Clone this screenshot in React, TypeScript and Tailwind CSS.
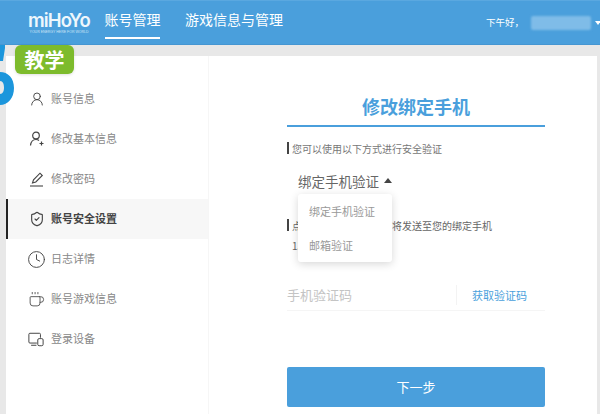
import { Clock, Coffee, ShieldCheck, UserRound } from "lucide-react";
import type { ReactNode } from "react";

const cjk = "font-['Noto_Sans_CJK_SC',sans-serif]";

function UserPlusIcon() {
  return (
    <svg width="16" height="16" viewBox="0 0 16 16" fill="none" stroke="currentColor" strokeWidth="1.2">
      <circle cx="7" cy="4.5" r="3.3" />
      <path d="M1.5 14.5c.4-3.6 2.4-6 5.500-6 1.200 0 2.200.3 3 1" />
      <path d="M12.500 10.500v4M10.500 12.500h4" />
    </svg>
  );
}

function PenIcon() {
  return (
    <svg width="16" height="16" viewBox="0 0 16 16" fill="none" stroke="currentColor" strokeWidth="1.1">
      <path d="M3.500 12l1-3.200L11 2.200l2.300 2.300-6.500 6.500z" />
      <path d="M1 15h13" />
    </svg>
  );
}

function DevicesIcon() {
  return (
    <svg className="-ml-[1px]" width="16" height="15" viewBox="0 0 18 16" fill="none" stroke="currentColor" strokeWidth="1.1">
      <path d="M10 12H2.200A1.200 1.200 0 0 1 1 10.800V2.200A1.200 1.200 0 0 1 2.200 1h10.600A1.200 1.200 0 0 1 14 2.200V6" />
      <path d="M3.500 14.500h6" />
      <rect x="11" y="7" width="6" height="8" rx="1.500" />
    </svg>
  );
}

const menu: { label: string; icon: ReactNode; active?: boolean }[] = [
  { label: "账号信息", icon: <UserRound size={16} strokeWidth={1.4} /> },
  { label: "修改基本信息", icon: <UserPlusIcon /> },
  { label: "修改密码", icon: <PenIcon /> },
  { label: "账号安全设置", icon: <ShieldCheck size={16} strokeWidth={1.7} />, active: true },
  { label: "日志详情", icon: <Clock className="-ml-[2px]" size={19} strokeWidth={1.2} /> },
  { label: "账号游戏信息", icon: <Coffee className="-ml-[1px]" size={17} strokeWidth={1.2} /> },
  { label: "登录设备", icon: <DevicesIcon /> },
];

function SideItem({ label, icon, active }: { label: string; icon: ReactNode; active?: boolean }) {
  return (
    <div
      className={
        active
          ? "h-10 flex items-center border-l-2 border-[#222] bg-[#f7f7f7] pl-[21px] text-[#444] font-bold"
          : "h-10 flex items-center pl-[23px] text-[#888]"
      }
    >
      <span className="w-[22px] flex justify-start text-[#444]">{icon}</span>
      <span className="text-[11px] mb-[1px]">{label}</span>
    </div>
  );
}

export default function App() {
  return (
    <div className={`relative w-[600px] h-[414px] overflow-hidden bg-[#e8e8e8] ${cjk}`}>
      <header className="h-[45px] bg-[#4a9fdc] border-t border-[#5aa8e0] border-b border-b-[#4596d2] flex items-center text-white">
        <div className="w-[62px] ml-[28px] flex flex-col items-center mt-[-1px]">
          <span className="font-['Inter',sans-serif] text-[18.500px] font-semibold tracking-[-0.9px] leading-[19px] text-[#eef7fd]">
            miHoYo
          </span>
          <span className="font-['Liberation_Sans',sans-serif] text-[3.500px] h-[4px] leading-[4px] whitespace-nowrap text-[#cfe6f6]">
            YOUR ENERGY HERE FOR WORLD
          </span>
        </div>
        <nav className="ml-[15px] flex self-start text-[14px]">
          <div className="h-[38px] w-[55px] flex items-center justify-center border-b-2 border-white whitespace-nowrap">
            账号管理
          </div>
          <div className="ml-[25px] h-[38px] flex items-center whitespace-nowrap pb-[2px]">游戏信息与管理</div>
        </nav>
        <div className="ml-auto flex items-center">
          <span className="text-[9.500px] mr-[7px]">下午好，</span>
          <span className="w-[60px] h-[14px] bg-[#7fbce8] rounded-[2px] blur-[1px]" />
          <span className="ml-[4px] w-0 h-0 border-x-[3.500px] border-x-transparent border-t-[4px] border-t-white mr-[-1px]" />
        </div>
      </header>

      <div className="flex h-[369px] pt-[11px] pl-[6px] pr-[3px]">
        <aside className="w-[203px] bg-white pt-[23px] border-r border-[#f6f6f6] shrink-0">
          {menu.map((m) => (
            <SideItem key={m.label} {...m} />
          ))}
        </aside>

        <main className="flex-1 bg-white pl-[78px] pr-[52px]">
          <h1 className="h-[71px] flex items-center justify-center text-[18px] font-bold text-[#4a9fdc] pt-[33px] pb-[1px] border-b-[2px] border-[#4a9fdc]">
            修改绑定手机
          </h1>
          <p className="mt-[15px] h-[12px] flex items-center text-[10px] text-[#777] border-l-[2px] border-[#444] pl-[3px]">
            您可以使用以下方式进行安全验证
          </p>

          <div className="relative">
            <div className="mt-[15px] ml-[11px] h-[24px] flex items-center text-[13.500px] text-[#666]">
              绑定手机验证
              <span className="ml-[5px] mb-[2px] w-0 h-0 border-x-[4px] border-x-transparent border-b-[5px] border-b-[#444]" />
            </div>
            <div className="absolute left-[11px] top-[25px] w-[94px] h-[68px] bg-white rounded-[3px] shadow-[0_2px_8px_rgba(0,0,0,0.16)] z-10 text-[11px] text-[#999] pl-[11px]">
              <div className="h-[34px] flex items-center">绑定手机验证</div>
              <div className="h-[34px] flex items-center">邮箱验证</div>
            </div>
          </div>

          <p className="mt-[26px] h-[12px] flex items-center text-[10px] text-[#666] border-l-[2px] border-[#444] pl-[3px] whitespace-nowrap">
            点击获取按钮，验证码将发送至您的绑定手机
          </p>
          <p className="mt-[7px] pl-[5px] h-[14px] flex items-center text-[10px] text-[#666]">138****0000</p>

          <div className="mt-[28px] h-[31px] flex items-center border-b border-[#f5f5f5]">
            <span className="text-[13px] text-[#c4c4c4] w-[169px]">手机验证码</span>
            <span className="h-[20px] border-l border-[#f3f3f3]" />
            <span className="ml-[15px] text-[11px] text-[#4a9fdc]">获取验证码</span>
          </div>

          <button className="mt-[56px] w-full h-[40px] bg-[#4a9fdc] rounded-[2px] text-white text-[13px]">下一步</button>
        </main>
      </div>

      <div className="absolute left-[15px] top-[45px] w-[59px] h-[29px] bg-[#7dbb2c] rounded-[6px] flex items-center justify-center text-white text-[20px] font-bold shadow-[0_1px_3px_rgba(0,0,0,0.12)]">
        教学
      </div>
      <svg className="absolute left-0 top-[45px]" width="16" height="62" viewBox="0 0 16 62" fill="none">
        <path d="M0 0h5v3L3 16H0z" fill="#1c96dc" />
        <path
          fillRule="evenodd"
          d="M0 27c8 0 14 6 14 16s-6 17-14 17zM0 36v13c3 0 4-3 4-6.500S3 36 0 36z"
          fill="#1c96dc"
        />
      </svg>
    </div>
  );
}
